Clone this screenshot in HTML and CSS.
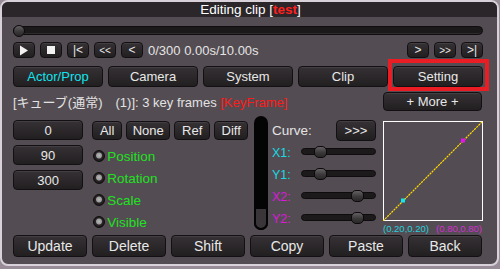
FILE: index.html
```html
<!DOCTYPE html>
<html>
<head>
<meta charset="utf-8">
<link rel="stylesheet" href="styles.css">
</head>
<body>
<div class="win">
  <div class="title">Editing clip [<b>test</b>]</div>
  <div class="content">
    <div class="seek"><div class="seek-track"></div><div class="knob seek-knob"></div></div>

    <div class="ctrl">
      <button class="btn pb"><svg width="10" height="11" viewBox="0 0 10 11"><path d="M1 0.5 L9 5.5 L1 10.5 Z" fill="#f2f2f2"/></svg></button>
      <button class="btn pb"><svg width="8" height="8" viewBox="0 0 8 8"><rect x="0" y="0" width="8" height="8" fill="#f2f2f2"/></svg></button>
      <button class="btn pb">|&lt;</button>
      <button class="btn pb small">&lt;&lt;</button>
      <button class="btn pb">&lt;</button>
      <span class="time">0/300 0.00s/10.00s</span>
      <span class="spacer"></span>
      <button class="btn pb">&gt;</button>
      <button class="btn pb small">&gt;&gt;</button>
      <button class="btn pb">&gt;|</button>
    </div>

    <div class="tabs">
      <button class="btn tab active">Actor/Prop</button>
      <button class="btn tab">Camera</button>
      <button class="btn tab">System</button>
      <button class="btn tab">Clip</button>
      <button class="btn tab hl">Setting<span class="mark"></span></button>
    </div>

    <div class="info">
      <span class="info-text">[キューブ(通常)　(1)]: 3 key frames <span class="red">[KeyFrame]</span></span>
      <button class="btn more">+ More +</button>
    </div>

    <div class="main">
      <div class="nums">
        <div class="btn num">0</div>
        <div class="btn num">90</div>
        <div class="btn num">300</div>
      </div>
      <div class="checks">
        <div class="sel">
          <button class="btn s1">All</button>
          <button class="btn s2">None</button>
          <button class="btn s3">Ref</button>
          <button class="btn s4">Diff</button>
        </div>
        <div class="radio"><span class="dot"></span>Position</div>
        <div class="radio"><span class="dot"></span>Rotation</div>
        <div class="radio"><span class="dot"></span>Scale</div>
        <div class="radio"><span class="dot"></span>Visible</div>
      </div>
      <div class="vbar"><div class="vthumb"></div></div>
      <div class="curve">
        <div class="curve-head"><span class="curve-label">Curve:</span><button class="btn next">&gt;&gt;&gt;</button></div>
        <div class="srow"><span class="slabel cyan">X1:</span><div class="strack"><div class="knob" style="left:12px"></div></div></div>
        <div class="srow"><span class="slabel cyan">Y1:</span><div class="strack"><div class="knob" style="left:12px"></div></div></div>
        <div class="srow"><span class="slabel mag">X2:</span><div class="strack"><div class="knob" style="left:49px"></div></div></div>
        <div class="srow"><span class="slabel mag">Y2:</span><div class="strack"><div class="knob" style="left:49px"></div></div></div>
      </div>
      <div class="graphcol">
        <svg class="graph" width="100" height="100" viewBox="0 0 100 100">
          <rect x="0.5" y="0.5" width="99" height="99" fill="none" stroke="#ffffff" stroke-width="1"/>
          <line x1="0" y1="100" x2="100" y2="0" stroke="#ffd800" stroke-width="1.2" stroke-dasharray="2.2 0.8"/>
          <rect x="18" y="77.5" width="4" height="4" fill="#10e8f0"/>
          <rect x="78" y="17.5" width="4" height="4" fill="#e810f0"/>
        </svg>
        <div class="glabels"><span class="cyan2">(0.20,0.20)</span><span class="mag2">(0.80,0.80)</span></div>
      </div>
    </div>

    <div class="bottom">
      <button class="btn bb">Update</button>
      <button class="btn bb">Delete</button>
      <button class="btn bb">Shift</button>
      <button class="btn bb">Copy</button>
      <button class="btn bb">Paste</button>
      <button class="btn bb">Back</button>
    </div>
  </div>
</div>
</body>
</html>
```

FILE: styles.css
```css
* { box-sizing: border-box; }
html, body { margin: 0; padding: 0; }
body {
  width: 500px;
  height: 269px;
  background: #978c97;
  font-family: "Liberation Sans", "Noto Sans CJK JP", sans-serif;
  font-size: 13px;
  color: #e6e6e6;
  overflow: hidden;
}
.win {
  width: 499px;
  height: 266px;
  border: 2px solid #d9d1d9;
  border-radius: 8px;
  background: #534c52;
  overflow: hidden;
}
.title {
  height: 15px;
  background: #2a2629;
  color: #ffffff;
  font-size: 13.5px;
  line-height: 15px;
  text-align: center;
  padding-left: 2px;
}
.title b { color: #ff2020; }
.content {
  padding: 0 14px 0 11px;
}
.btn {
  font-family: inherit;
  font-size: 13px;
  color: #e8e8e8;
  background: linear-gradient(#353134, #221f21);
  border: 1px solid #121012;
  border-radius: 4px;
  padding: 0;
  margin: 0;
  display: flex;
  align-items: center;
  justify-content: center;
  box-shadow: inset 0 1px 0 rgba(255,255,255,0.07);
}
.knob {
  position: absolute;
  width: 13px;
  height: 12px;
  border-radius: 5px;
  border: 1px solid #0c0a0b;
  background: linear-gradient(#626060, #3c393b 55%, #2a2729);
  top: -3px;
}
/* seek */
.seek {
  position: relative;
  margin-top: 8px;
  height: 11px;
}
.seek-track {
  position: absolute;
  left: 0; right: 0; top: 1px;
  height: 9px;
  background: #1c191b;
  border: 1px solid #0e0c0d;
  border-radius: 5px;
  box-shadow: inset 0 -1px 0 rgba(255,255,255,0.08);
}
.seek-knob { left: 0; top: -0.5px; width: 12px; height: 12px; border-radius: 6px; }
/* ctrl */
.ctrl {
  display: flex;
  align-items: center;
  gap: 5px;
  margin-top: 6px;
  height: 16px;
}
.pb { width: 22px; height: 16px; font-size: 12px; }
.pb.small { font-size: 10px; }
.time { margin-left: 0; font-size: 13px; color: #e4e4e4; }
.spacer { flex: 1; }
/* tabs */
.tabs {
  display: flex;
  gap: 5px;
  margin-top: 8px;
  height: 21px;
}
.tab { flex: 1; height: 21px; position: relative; }
.tab.active { color: #10e4ee; }
.mark {
  position: absolute;
  left: -6px; right: -7px; top: -8px; bottom: -5px;
  border: 4px solid #ea1c24;
}
/* info */
.info {
  display: flex;
  align-items: center;
  justify-content: space-between;
  margin-top: 5px;
  height: 19px;
}
.info-text { color: #e2e2e2; font-size: 13px; }
.red { color: #ff1a1a; }
.more { width: 99px; height: 19px; margin-right: 1px; }
/* main */
.main {
  display: flex;
  margin-top: 5px;
  height: 115px;
}
.nums {
  display: flex;
  flex-direction: column;
  gap: 5px;
  width: 71px;
  padding-top: 4px;
}
.num { height: 20px; }
.checks {
  width: 156px;
  margin-left: 9px;
  padding-top: 5px;
}
.sel { display: flex; gap: 4px; height: 19px; margin-bottom: 5px; }
.sel .btn { height: 19px; }
.s1 { width: 30px; }
.s2 { width: 44px; }
.s3 { width: 36px; }
.s4 { width: 34px; }
.radio {
  display: flex;
  align-items: center;
  height: 22px;
  color: #22e022;
  font-size: 13.5px;
}
.dot {
  width: 12px;
  height: 12px;
  border-radius: 50%;
  background: radial-gradient(circle at 50% 45%, #b8b8b8 0, #9a9a9a 2.5px, #2a2628 3.5px, #1a1719 6px);
  border: 1px solid #0e0c0d;
  margin: 0 2px 0 1px;
}
.vbar {
  position: relative;
  width: 14px;
  height: 114px;
  margin-left: 6px;
  background: #040404;
  border-radius: 7px;
}
.vthumb {
  position: absolute;
  left: 0; right: 0; bottom: 0;
  height: 22px;
  background: #3a3539;
  border: 2px solid #040404;
  border-top-width: 1px;
  border-radius: 2px 2px 7px 7px;
}
.curve {
  width: 104px;
  margin-left: 4px;
  padding-top: 4px;
}
.curve-head {
  display: flex;
  align-items: center;
  justify-content: space-between;
  height: 21px;
  margin-bottom: -1px;
}
.curve-label { color: #e4e4e4; font-size: 13.5px; }
.next { width: 40px; height: 21px; font-size: 13px; }
.srow {
  display: flex;
  align-items: center;
  height: 22px;
}
.slabel { width: 29px; font-size: 12.5px; padding-top: 4px; }
.cyan { color: #18d8e2; }
.mag { color: #dc18dc; }
.strack {
  position: relative;
  width: 75px;
  height: 7px;
  background: #1d1a1c;
  border: 1px solid #0e0c0d;
  border-radius: 4px;
}
.graphcol {
  margin-left: 7px;
  padding-top: 5px;
  width: 100px;
}
.graph { display: block; }
.glabels {
  display: flex;
  justify-content: space-between;
  font-size: 9.5px;
  margin-top: 2px;
}
.cyan2 { color: #26d0dc; }
.mag2 { color: #d430d4; margin-right: 1px; }
/* bottom */
.bottom {
  display: flex;
  gap: 5px;
  margin-top: 4px;
  height: 22px;
}
.bb { width: 74px; height: 22px; font-size: 14px; }
```
